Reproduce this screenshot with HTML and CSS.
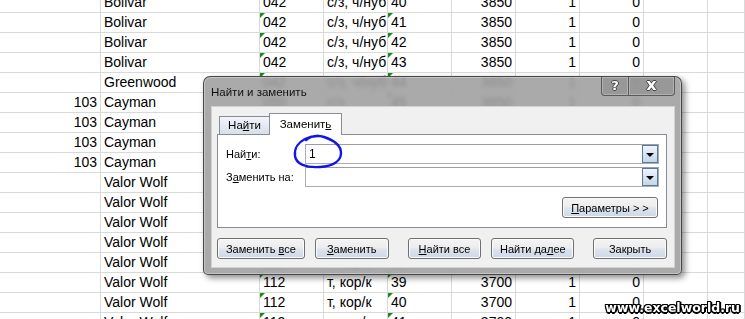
FILE: index.html
```html
<!DOCTYPE html>
<html lang="ru">

<head>
  <meta charset="UTF-8">
  <title>Найти и заменить</title>
  <link rel="stylesheet" href="styles.css">
</head>

<body>

  <!-- лист -->
  <div class="sheet" id="sheet"></div>

  <!-- диалог -->
  <div class="dialog">
    <div class="titlebar">
      <span class="title">Найти и заменить</span>
      <div class="capbtns">
        <span class="capbtn help">?</span>
        <span class="capbtn close">x</span>
      </div>
    </div>

    <div class="client">
      <div class="tabs">
        <div class="tab">На<u>й</u>ти</div>
        <div class="tab active">Заменит<u>ь</u></div>
      </div>

      <div class="panel">
        <div class="frow">
          <span class="flabel">Най<u>т</u>и:</span>
          <div class="field"><span class="val">1</span><span class="drop"></span></div>
        </div>
        <div class="frow">
          <span class="flabel">З<u>а</u>менить на:</span>
          <div class="field"><span class="val"></span><span class="drop"></span></div>
        </div>
        <div class="opts-row">
          <button class="btn opts"><u>П</u>араметры &gt; &gt;</button>
        </div>
      </div>

      <div class="actions">
        <button class="btn b-all">Заменить <u>в</u>се</button>
        <button class="btn b-one"><u>З</u>аменить</button>
        <button class="btn b-findall"><u>Н</u>айти все</button>
        <button class="btn b-next">Найти да<u>л</u>ее</button>
        <button class="btn b-close">Закрыть</button>
      </div>
    </div>
  </div>

  <!-- обвели от руки -->
  <svg class="scribble" width="745" height="319" viewBox="0 0 745 319">
    <path d="M306 140 C311 136, 318 135, 324 137 C333 140, 341 145, 341 153 C341 161, 333 166, 320 167 C306 168, 296 164, 295 156 C294 148, 299 142, 305 139 C309 137, 313 136, 318 136"
      fill="none" stroke="#1414e6" stroke-width="2.4" stroke-linecap="round" />
  </svg>

  <div class="wm">www.excelworld.ru</div>

  <script>
    const rows = [
      ['', 'Bolivar', '042', 'с/з, ч/нуб', '40', '3850', '1', '0'],
      ['', 'Bolivar', '042', 'с/з, ч/нуб', '41', '3850', '1', '0'],
      ['', 'Bolivar', '042', 'с/з, ч/нуб', '42', '3850', '1', '0'],
      ['', 'Bolivar', '042', 'с/з, ч/нуб', '43', '3850', '1', '0'],
      ['', 'Greenwood', '042', 'с/з, ч/нуб', '44', '3850', '1', '0'],
      ['103', 'Cayman', '050', 'с/з', '45', '3850', '1', '0'],
      ['103', 'Cayman', '050', 'с/з', '46', '3850', '1', '0'],
      ['103', 'Cayman', '050', 'с/з', '47', '3850', '1', '0'],
      ['103', 'Cayman', '050', 'с/з', '48', '3850', '1', '0'],
      ['', 'Valor Wolf', '112', 'т, кор/к', '34', '3700', '1', '0'],
      ['', 'Valor Wolf', '112', 'т, кор/к', '35', '3700', '1', '0'],
      ['', 'Valor Wolf', '112', 'т, кор/к', '36', '3700', '1', '0'],
      ['', 'Valor Wolf', '112', 'т, кор/к', '37', '3700', '1', '0'],
      ['', 'Valor Wolf', '112', 'т, кор/к', '38', '3700', '1', '0'],
      ['', 'Valor Wolf', '112', 'т, кор/к', '39', '3700', '1', '0'],
      ['', 'Valor Wolf', '112', 'т, кор/к', '40', '3700', '1', '0'],
      ['', 'Valor Wolf', '112', 'т, кор/к', '41', '3700', '1', '0']
    ];

    // колонки с числами вправо, C и E — текст с зелёным уголком
    const numCols = [0, 5, 6, 7];
    const triCols = [2, 4];

    const sheet = document.getElementById('sheet');

    rows.forEach(r => {
      const row = document.createElement('div');
      row.className = 'row';
      for (let i = 0; i < 10; i++) {
        const c = document.createElement('div');
        c.className = 'cell';
        if (numCols.includes(i)) c.classList.add('num');
        if (triCols.includes(i) && r[i]) c.classList.add('tri');
        c.textContent = r[i] || '';
        row.appendChild(c);
      }
      sheet.appendChild(row);
    });
  </script>

</body>

</html>
```

FILE: styles.css
```css
body {
  margin: 0;
  width: 745px;
  height: 319px;
  overflow: hidden;
  position: relative;
  background: #fff;
  font-family: "Liberation Sans", Arial, sans-serif;
  color: #000;
}

/* лист Excel */
.sheet {
  margin-top: -7px;
}

.row {
  display: grid;
  grid-template-columns: 101px 159px 64px 64px 64px 64px 64px 64px 64px 1fr;
  height: 20px;
}

.cell {
  box-sizing: border-box;
  border-right: 1px solid #d9d9d9;
  border-bottom: 1px solid #d9d9d9;
  font-size: 14px;
  line-height: 19px;
  padding: 0 3px;
  white-space: nowrap;
  overflow: hidden;
  position: relative;
}

.num {
  text-align: right;
}

.tri::before {
  content: "";
  position: absolute;
  left: 0;
  top: 0;
  border-top: 5px solid #1a8a1a;
  border-right: 5px solid transparent;
}

/* окно */
.dialog {
  position: absolute;
  left: 203px;
  top: 76px;
  width: 479px;
  height: 199px;
  box-sizing: border-box;
  border: 1px solid rgba(55, 55, 55, 0.85);
  border-radius: 7px 7px 5px 5px;
  background: rgba(158, 158, 158, 0.88);
  backdrop-filter: blur(2px);
  box-shadow: inset 0 0 0 1px rgba(255, 255, 255, 0.3), 3px 3px 6px rgba(0, 0, 0, 0.45);
  display: flex;
  flex-direction: column;
  font-size: 11px;
}

.titlebar {
  height: 29px;
  display: flex;
  align-items: center;
  padding-left: 7px;
  position: relative;
  flex-shrink: 0;
}

.title {
  font-size: 11.5px;
  color: #111;
}

.capbtns {
  position: absolute;
  top: 0;
  right: 6px;
  display: flex;
}

.capbtn {
  height: 19px;
  box-sizing: border-box;
  border: 1px solid #5a5a5a;
  border-top: none;
  background: rgba(150, 150, 150, 0.9);
  box-shadow: inset 0 0 0 1px rgba(255, 255, 255, 0.25);
  color: #fff;
  font-family: "DejaVu Sans", sans-serif;
  font-weight: bold;
  text-align: center;
  text-shadow: 1px 0 0 #444, -1px 0 0 #444, 0 1px 0 #444, 0 -1px 0 #444;
}

.help {
  width: 28px;
  border-radius: 0 0 0 4px;
  font-size: 13px;
  line-height: 17px;
}

.close {
  width: 46px;
  border-left: none;
  border-radius: 0 0 4px 0;
  font-size: 16px;
  line-height: 15px;
}

.client {
  flex: 1;
  margin: 0 6px 6px 7px;
  background: #f0f0f0;
  border: 1px solid #d2d2d2;
  padding: 6px 7px 0 5px;
}

/* вкладки */
.tabs {
  display: flex;
  align-items: flex-end;
  height: 21px;
  padding-left: 2px;
}

.tab {
  box-sizing: border-box;
  height: 18px;
  width: 50px;
  border: 1px solid #898c95;
  border-bottom: none;
  border-right: none;
  background: linear-gradient(#f2f5f9, #d6dfea);
  text-align: center;
  line-height: 17px;
  font-size: 11.5px;
}

.tab.active {
  width: 73px;
  height: 22px;
  margin-bottom: -1px;
  border-right: 1px solid #898c95;
  background: #fff;
  line-height: 21px;
  position: relative;
  z-index: 1;
}

.panel {
  border: 1px solid #898c95;
  background: #fff;
  padding: 9px 7px 9px 8px;
}

.frow {
  display: flex;
  align-items: center;
  height: 20px;
}

.frow+.frow {
  margin-top: 3px;
}

.flabel {
  width: 79px;
}

.field {
  flex: 1;
  height: 20px;
  box-sizing: border-box;
  border: 1px solid #abadb3;
  border-top-color: #9a9da5;
  background: #fff;
  display: flex;
  align-items: center;
  justify-content: space-between;
}

.val {
  padding-left: 3px;
  font-size: 12px;
}

.drop {
  width: 16px;
  height: 18px;
  box-sizing: border-box;
  border: 1px solid #5a7a9c;
  background: linear-gradient(#eef4fa, #c3d6ea);
  position: relative;
}

.drop::after {
  content: "";
  position: absolute;
  left: 3px;
  top: 7px;
  border-top: 4px solid #000;
  border-left: 4px solid transparent;
  border-right: 4px solid transparent;
}

.opts-row {
  display: flex;
  justify-content: flex-end;
  margin-top: 10px;
}

/* кнопки */
.btn {
  height: 21px;
  box-sizing: border-box;
  border: 1px solid #707070;
  border-radius: 3px;
  background: linear-gradient(#f4f4f4, #ececec 48%, #dde5ee 52%, #cdd8e4);
  box-shadow: inset 0 0 0 1px #fbfbfb;
  font-family: "Liberation Sans", Arial, sans-serif;
  font-size: 11px;
  color: #000;
  padding: 0;
  text-align: center;
}

.opts {
  width: 96px;
  margin-right: 1px;
}

.actions {
  display: flex;
  margin-top: 10px;
}

.b-all {
  width: 88px;
  margin-right: 10px;
}

.b-one {
  width: 74px;
  margin-right: 19px;
}

.b-findall {
  width: 74px;
  margin-right: 10px;
}

.b-next {
  width: 83px;
  margin-right: 19px;
}

.b-close {
  width: 74px;
}

.scribble {
  position: absolute;
  left: 0;
  top: 0;
  pointer-events: none;
}

.wm {
  position: absolute;
  right: 5px;
  bottom: 4px;
  font-family: "DejaVu Sans", sans-serif;
  font-weight: bold;
  font-size: 12.5px;
  color: #fff;
  text-shadow: 1px 0 0 #000, -1px 0 0 #000, 0 1px 0 #000, 0 -1px 0 #000,
    1px 1px 0 #000, -1px -1px 0 #000, 1px -1px 0 #000, -1px 1px 0 #000,
    2px 0 0 #000, 0 2px 0 #000;
}
```
